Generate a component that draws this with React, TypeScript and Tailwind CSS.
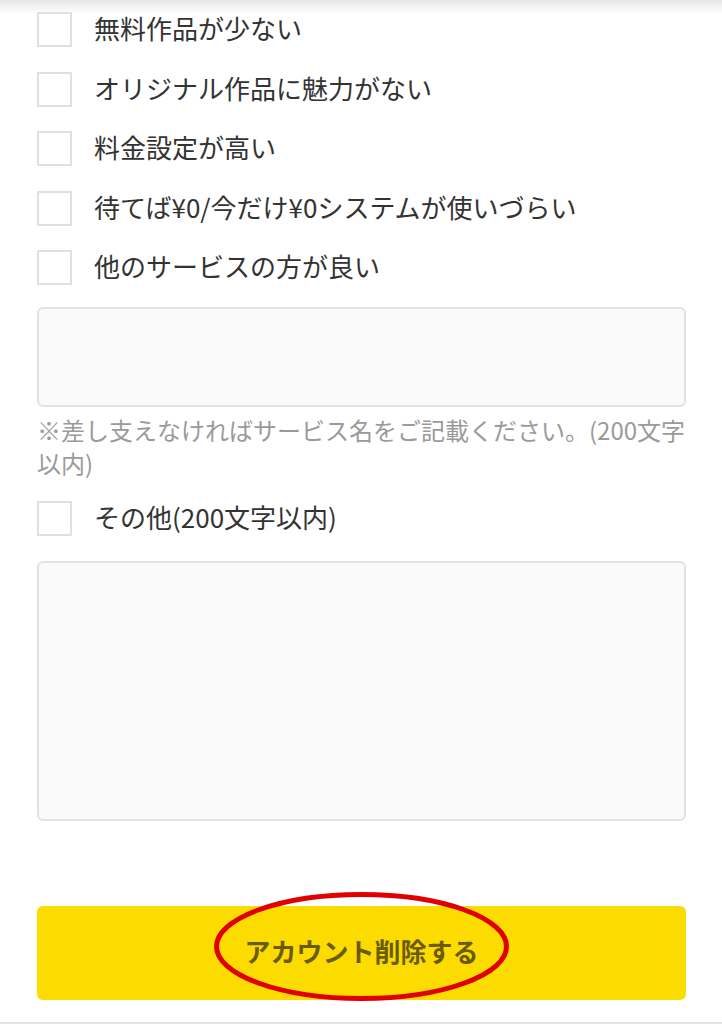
import React from 'react';

const reasons = [
  '無料作品が少ない',
  'オリジナル作品に魅力がない',
  '料金設定が高い',
  '待てば¥0/今だけ¥0システムが使いづらい',
  '他のサービスの方が良い',
];

function Box() {
  return <span className="w-[35px] h-[35px] shrink-0 border-2 border-[#e0e0e0] bg-white" />;
}

function Row({ label }: { label: string }) {
  return (
    <label className="flex items-center h-[59.5px]">
      <Box />
      <span className="ml-[22px] pb-[3px] text-[26px] leading-none text-[#333]">{label}</span>
    </label>
  );
}

export default function App() {
  return (
    <div
      className="relative w-[722px] h-[1024px] bg-white overflow-hidden"
      style={{ fontFamily: '"Noto Sans CJK JP", "Noto Sans", sans-serif' }}
    >
      {/* shadow from the header above */}
      <div className="absolute top-0 left-0 right-0 h-[14px] bg-gradient-to-b from-[#e6e6e6] to-white/0" />

      <div className="pl-[37px] pr-[36px] flex flex-col">
        {reasons.map((r) => (
          <Row key={r} label={r} />
        ))}

        <div className="mt-[9px] h-[100px] rounded-[6px] border-2 border-[#e2e2e2] bg-[#fafafa]" />
        <p className="mt-[6px] text-[24px] leading-[33px] text-[#9a9a9a]">
          ※差し支えなければサービス名をご記載ください。(200文字以内)
        </p>

        <div className="mt-[10px]">
          <Row label="その他(200文字以内)" />
        </div>

        <div className="mt-[13px] h-[260px] rounded-[6px] border-2 border-[#e2e2e2] bg-[#fafafa]" />

        <button className="mt-[85px] h-[94px] rounded-[6px] bg-[#fcdb00] text-[26px] font-bold text-[#6a5a00]">
          <span className="relative -top-[3px]">アカウント削除する</span>
        </button>
      </div>

      <div className="absolute bottom-0 left-0 right-0 h-[2px] bg-[#e4e4e4]" />

      {/* red marker around the button label */}
      <svg className="absolute left-0 top-0 pointer-events-none" width="722" height="1024">
        <ellipse cx="361.5" cy="946.5" rx="145" ry="52" fill="none" stroke="#e00000" strokeWidth="5" />
      </svg>
    </div>
  );
}
